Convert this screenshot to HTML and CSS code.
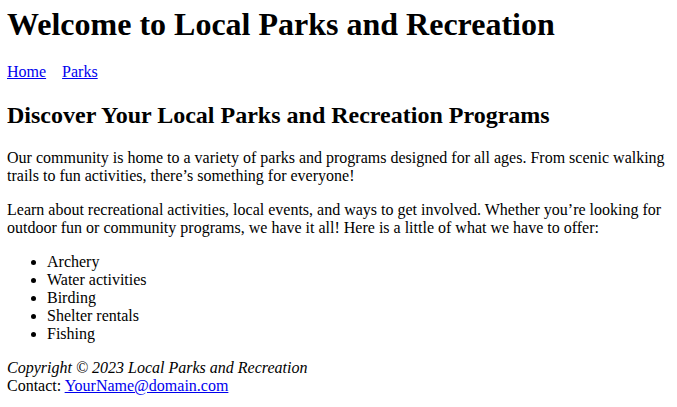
FILE: index.html
```html
<!DOCTYPE html>
<html lang="en">
<head>
<meta charset="utf-8">
<title>Local Parks and Recreation</title>
<link rel="stylesheet" href="styles.css">
</head>
<body>
<header class="site-header">
  <h1 class="site-title">Welcome to Local Parks and Recreation</h1>
  <nav class="site-nav">
    <a href="#">Home</a>
    <a href="#">Parks</a>
  </nav>
</header>
<main>
  <h2 class="intro-title">Discover Your Local Parks and Recreation Programs</h2>
  <p>Our community is home to a variety of parks and programs designed for all ages. From scenic walking trails to fun activities, there’s something for everyone!</p>
  <p>Learn about recreational activities, local events, and ways to get involved. Whether you’re looking for outdoor fun or community programs, we have it all! Here is a little of what we have to offer:</p>
  <ul>
    <li>Archery</li>
    <li>Water activities</li>
    <li>Birding</li>
    <li>Shelter rentals</li>
    <li>Fishing</li>
  </ul>
</main>
<footer class="site-footer">
  <em>Copyright © 2023 Local Parks and Recreation</em><br>
  Contact: <a href="#">YourName@domain.com</a>
</footer>
</body>
</html>
```
FILE: styles.css
```css
body {
  margin: 6px 8px 8px 7px;
  font-family: "Liberation Serif", "Times New Roman", serif;
}
.site-title {
  margin-top: 0;
  margin-bottom: 20px;
}
.site-nav {
  display: flex;
  gap: 16px;
}
.intro-title {
  margin-top: 21px;
}
```
